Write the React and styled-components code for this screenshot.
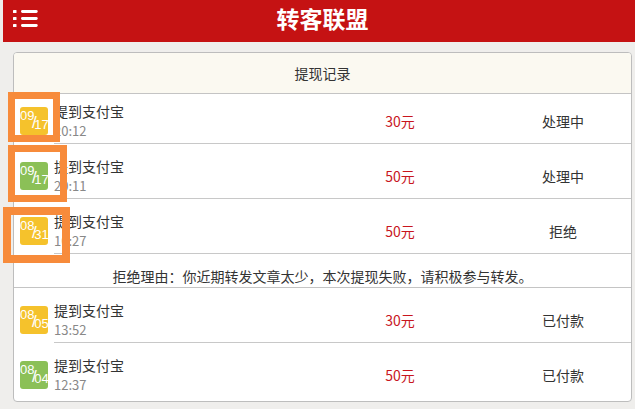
import React from "react";
import styled, { createGlobalStyle } from "styled-components";

const GlobalStyle = createGlobalStyle`
  html, body { margin: 0; padding: 0; background: #efeeec; overflow: hidden; }
  body { font-family: "Noto Sans CJK SC", "Noto Sans", sans-serif; }
`;

const Screen = styled.div`
  position: relative;
  width: 635px;
  height: 409px;
  overflow: hidden;
`;

const Page = styled.div`
  width: 639px;
  margin-left: 3px;
`;

const Header = styled.header`
  display: grid;
  grid-template-columns: 1fr auto 1fr;
  align-items: center;
  height: 42px;
  padding-bottom: 6px;
  box-sizing: border-box;
  background: #c51213;
`;

const MenuButton = styled.div`
  display: flex;
  padding-left: 10px;
`;

const Title = styled.h1`
  margin: 0;
  font-size: 23px;
  font-weight: 700;
  line-height: 1;
  color: #fff;
`;

const Card = styled.section`
  margin: 10px 10px 0;
  border: 1px solid #bdbdbd;
  border-radius: 4px;
  background: #fff;
  overflow: hidden;
`;

const CardHead = styled.div`
  height: 40px;
  display: flex;
  align-items: center;
  justify-content: center;
  background: #fbf9f1;
  border-bottom: 1px solid #c4c4c4;
  font-size: 14px;
  color: #333;
`;

const Row = styled.div`
  display: flex;
  align-items: flex-start;
`;

const IconCell = styled.div`
  margin: ${(p) => (p.$compact ? 13 : 18)}px 6px 0 6px;
`;

const DateBadge = styled.div`
  width: 28px;
  height: 28px;
  border-radius: 3px;
  background: ${(p) => (p.$tone === "green" ? "#8bc057" : "#f5c22c")};
  display: flex;
  color: #fff;
  font-family: "Liberation Sans", Arial, sans-serif;
  font-size: 13px;
  line-height: 13px;
  white-space: nowrap;
`;

const Month = styled.span`
  align-self: flex-start;
  margin-top: 2px;
`;

const Slash = styled.span`
  align-self: center;
  font-size: 17px;
  line-height: 17px;
  margin: 3px -2.5px 0;
`;

const Day = styled.span`
  align-self: flex-end;
  margin-bottom: 4px;
`;

const RowBody = styled.div`
  flex: 1;
  display: grid;
  grid-template-columns: 251px 190px 1fr;
  align-items: start;
  box-sizing: border-box;
  height: ${(p) => (p.$compact ? 50 : p.$last ? 58 : 55)}px;
  padding-top: ${(p) => (p.$compact ? 7 : 12)}px;
  border-bottom: ${(p) => (p.$last ? "none" : "1px solid #c8c8c8")};
`;

const TextBlock = styled.div`
  display: flex;
  flex-direction: column;
`;

const RowTitle = styled.div`
  font-size: 14px;
  line-height: 21px;
  color: #333;
`;

const RowTime = styled.div`
  font-size: 13px;
  line-height: 18px;
  color: #888;
`;

const Cell = styled.div`
  margin-top: 10px;
  font-size: 14px;
  line-height: 20px;
  text-align: center;
  color: ${(p) => (p.$accent ? "#c8161e" : "#333")};
`;

const Reason = styled.div`
  height: 34px;
  box-sizing: border-box;
  padding-top: 12px;
  font-size: 14px;
  line-height: 20px;
  text-align: center;
  color: #333;
  border-bottom: 1px solid #c4c4c4;
`;

const Highlight = styled.div`
  position: absolute;
  left: ${(p) => p.$x}px;
  top: ${(p) => p.$y}px;
  width: ${(p) => p.$w}px;
  height: ${(p) => p.$h}px;
  border: ${(p) => p.$b}px solid #f78b3b;
  box-sizing: border-box;
  pointer-events: none;
`;

const MenuIcon = () => (
  <svg width="25" height="17" viewBox="0 0 25 17" fill="#fff">
    {[0, 7, 14].map((y) => (
      <g key={y}>
        <rect x="0" y={y} width="3.5" height="3" rx="0.6" />
        <rect x="8" y={y} width="16.7" height="3" rx="1.4" />
      </g>
    ))}
  </svg>
);

const group1 = [
  { m: "09", d: "17", tone: "yellow", time: "20:12", amount: "30元", status: "处理中" },
  { m: "09", d: "17", tone: "green", time: "20:11", amount: "50元", status: "处理中" },
  { m: "08", d: "31", tone: "yellow", time: "10:27", amount: "50元", status: "拒绝" },
];

const group2 = [
  { m: "08", d: "05", tone: "yellow", time: "13:52", amount: "30元", status: "已付款" },
  { m: "08", d: "04", tone: "green", time: "12:37", amount: "50元", status: "已付款" },
];

const RecordRow = ({ item, compact, last }) => (
  <Row>
    <IconCell $compact={compact}>
      <DateBadge $tone={item.tone}>
        <Month>{item.m}</Month>
        <Slash>/</Slash>
        <Day>{item.d}</Day>
      </DateBadge>
    </IconCell>
    <RowBody $compact={compact} $last={last}>
      <TextBlock>
        <RowTitle>提到支付宝</RowTitle>
        <RowTime>{item.time}</RowTime>
      </TextBlock>
      <Cell $accent>{item.amount}</Cell>
      <Cell>{item.status}</Cell>
    </RowBody>
  </Row>
);

export default function App() {
  return (
    <Screen>
      <GlobalStyle />
      <Page>
        <Header>
          <MenuButton>
            <MenuIcon />
          </MenuButton>
          <Title>转客联盟</Title>
          <div />
        </Header>
        <Card>
          <CardHead>提现记录</CardHead>
          {group1.map((item, i) => (
            <RecordRow key={i} item={item} compact={i === 0} />
          ))}
          <Reason>拒绝理由：你近期转发文章太少，本次提现失败，请积极参与转发。</Reason>
          {group2.map((item, i) => (
            <RecordRow key={i} item={item} last={i === group2.length - 1} />
          ))}
        </Card>
      </Page>
      <Highlight $x={8} $y={92} $w={52} $h={50} $b={7} />
      <Highlight $x={8} $y={145} $w={59} $h={57} $b={7} />
      <Highlight $x={3} $y={207} $w={67} $h={56} $b={8} />
    </Screen>
  );
}
